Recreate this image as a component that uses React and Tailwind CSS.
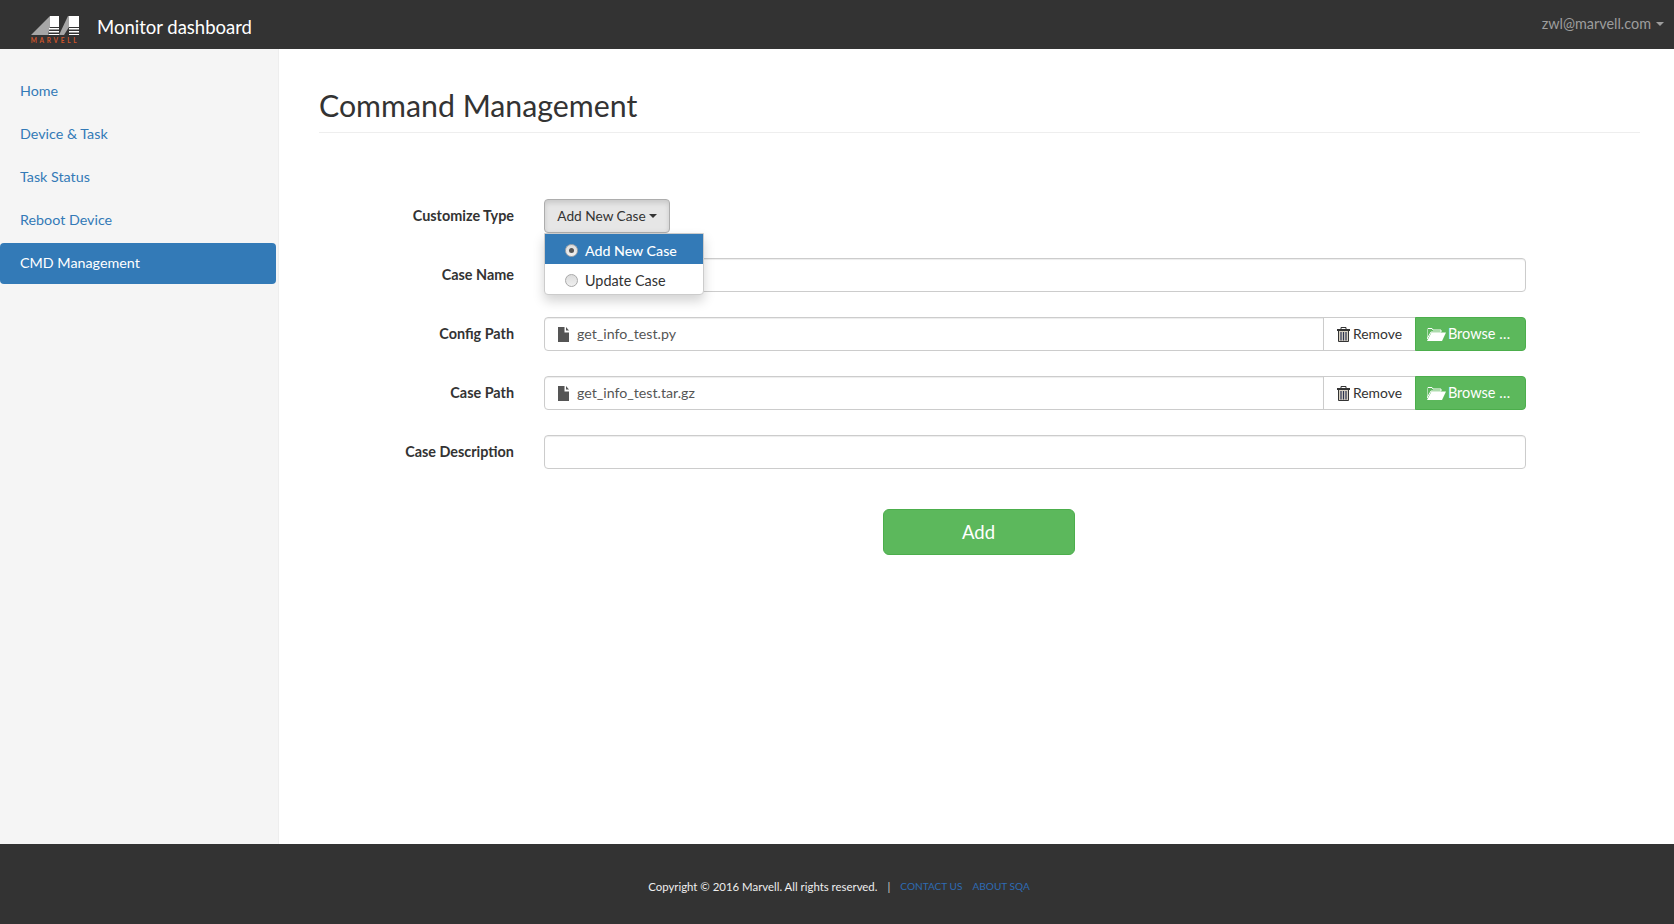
import React from "react";

const navItems = ["Home", "Device & Task", "Task Status", "Reboot Device", "CMD Management"];

const Logo = () => (
  <svg width="48" height="19" viewBox="0 0 48 19" className="block">
    <polygon points="0,19 19,0 19,11 17,19" fill="#a6a6a6" />
    <rect x="19" y="0" width="9" height="11" fill="#ffffff" />
    <rect x="18" y="12" width="10" height="1.5" fill="#ffffff" />
    <rect x="18" y="15" width="10" height="1.5" fill="#ffffff" />
    <rect x="17.500" y="18" width="10.500" height="1" fill="#ffffff" />
    <polygon points="28,19 37,0 38,0 38,11 33,19" fill="#a6a6a6" />
    <rect x="38" y="0" width="10" height="11" fill="#ffffff" />
    <rect x="38" y="12" width="10" height="1.5" fill="#ffffff" />
    <rect x="38" y="15" width="10" height="1.5" fill="#ffffff" />
    <rect x="38" y="18" width="10" height="1" fill="#ffffff" />
  </svg>
);

const FileIcon = () => (
  <svg width="11" height="15" viewBox="0 0 11 15" className="shrink-0">
    <path d="M0 0h6.500v5.500H11V15H0z" fill="#555555" />
    <path d="M8 0l3 3.500H8z" fill="#555555" />
  </svg>
);

const TrashIcon = () => (
  <svg width="13" height="15" viewBox="0 0 13 15" className="shrink-0">
    <path d="M4 2.500V.5h5v2" fill="none" stroke="#333333" />
    <path d="M0 2h13v2H0z" fill="#333333" />
    <path d="M1.500 4v10.500h10V4" fill="#d8d2c4" stroke="#333333" />
    <path d="M4 5v8.500M6.500 5v8.500M9 5v8.500" stroke="#2b3350" strokeWidth="1.200" />
  </svg>
);

const FolderOpenIcon = () => (
  <svg width="19" height="13" viewBox="0 0 19 13" className="shrink-0">
    <path d="M0 11V1.500L1 .5h4l1 1.500h8v2H4z" fill="none" stroke="#ffffff" strokeWidth="1" />
    <path d="M4.500 4.500H19L15 13H0z" fill="#ffffff" />
  </svg>
);

const Label = ({ children }) => (
  <label className="w-[195px] shrink-0 text-right text-[14.400px] font-bold text-[#333333]">{children}</label>
);

const FileRow = ({ label, file }) => (
  <div className="flex items-center">
    <Label>{label}</Label>
    <div className="ml-[30px] flex h-[34px] flex-1">
      <div className="flex flex-1 items-center gap-[8px] rounded-l-[4px] border border-[#cccccc] pl-[13px] text-[14.200px] text-[#555555] shadow-[inset_0_1px_1px_rgba(0,0,0,0.075)]">
        <FileIcon />
        <span>{file}</span>
      </div>
      <button className="-ml-px flex w-[93px] items-center justify-center gap-[3px] border border-[#cccccc] bg-white text-[13.900px] text-[#333333]">
        <TrashIcon />
        Remove
      </button>
      <button className="-ml-px flex w-[111px] items-center justify-center gap-[2px] rounded-r-[4px] border border-[#4cae4c] bg-[#5cb85c] pr-[4px] text-[14.500px] text-white">
        <FolderOpenIcon />
        Browse …
      </button>
    </div>
  </div>
);

const TextRow = ({ label }) => (
  <div className="flex items-center">
    <Label>{label}</Label>
    <input className="ml-[30px] h-[34px] flex-1 rounded-[4px] border border-[#cccccc] shadow-[inset_0_1px_1px_rgba(0,0,0,0.075)]" />
  </div>
);

const Radio = ({ checked }) => (
  <span className="flex h-[13px] w-[13px] items-center justify-center rounded-full border border-[#a9a9a9] bg-gradient-to-b from-[#dcdcdc] to-[#f0f0f0]">
    {checked && <span className="h-[5px] w-[5px] rounded-full bg-[#555555]" />}
  </span>
);

export default function App() {
  return (
    <div className="flex h-[924px] flex-col bg-white font-['Lato','Liberation_Sans',sans-serif] text-[14.300px] text-[#333333]">
      <header className="flex h-[49px] shrink-0 items-center justify-between bg-[#333333]">
        <div className="flex items-center">
          <div className="ml-[31px] mt-[10px] flex w-[48px] flex-col items-center">
            <Logo />
            <span className="mt-[2px] whitespace-nowrap text-[6.500px] font-bold leading-[7px] tracking-[2.700px] text-[#d0552a]">MARVELL</span>
          </div>
          <span className="ml-[18px] mt-[7px] text-[18.500px] text-white">Monitor dashboard</span>
        </div>
        <div className="mr-[10px] -mt-[1px] flex items-center gap-[5px] text-[14.400px] text-[#9d9d9d]">
          zwl@marvell.com
          <span className="mt-[1px] border-x-[4px] border-t-[4px] border-x-transparent border-t-[#9d9d9d]" />
        </div>
      </header>

      <div className="flex flex-1">
        <aside className="w-[279px] shrink-0 border-r border-[#eeeeee] bg-[#f5f5f5] pt-[21px] pr-[2px]">
          <ul className="flex flex-col gap-[2px]">
            {navItems.map((item) => (
              <li
                key={item}
                className={
                  item === "CMD Management"
                    ? "mt-[1px] flex h-[41px] items-center rounded-[4px] bg-[#337ab7] px-[20px] pb-[2px] text-white"
                    : "flex h-[41px] items-center px-[20px] text-[#337ab7]"
                }
              >
                {item}
              </li>
            ))}
          </ul>
        </aside>

        <main className="flex-1 pl-[40px] pr-[34px]">
          <h1 className="mt-[38px] border-b border-[#eeeeee] pb-[9px] text-[30.300px] leading-[36px] text-[#333333]">
            Command Management
          </h1>
          <div className="pr-[114px] pt-[66px]">
            <div className="relative">
              <div className="flex items-center">
                <Label>Customize Type</Label>
                <button className="ml-[30px] flex h-[34px] w-[126px] items-center justify-center gap-[3px] rounded-[4px] border border-[#adadad] bg-[#e6e6e6] text-[13.700px] text-[#333333] shadow-[inset_0_3px_5px_rgba(0,0,0,0.125)]">
                  Add New Case
                  <span className="border-x-[4px] border-t-[4px] border-x-transparent border-t-[#333333]" />
                </button>
              </div>
              <div className="absolute left-[225px] top-[34px] z-10 w-[160px] overflow-hidden rounded-b-[4px] border border-[#cccccc] bg-white text-[14.400px] shadow-[0_6px_12px_rgba(0,0,0,0.175)]">
                <div className="flex h-[30px] items-center gap-[7px] bg-[#337ab7] pl-[20px] pt-[3px] text-[14.200px] font-medium text-white">
                  <Radio checked />
                  Add New Case
                </div>
                <div className="flex h-[30px] items-center gap-[7px] pl-[20px] pt-[3px] text-[#333333]">
                  <Radio />
                  Update Case
                </div>
              </div>
            </div>
            <div className="mt-[25px] flex flex-col gap-[25px]">
              <TextRow label="Case Name" />
              <FileRow label="Config Path" file="get_info_test.py" />
              <FileRow label="Case Path" file="get_info_test.tar.gz" />
              <TextRow label="Case Description" />
            </div>
            <div className="mt-[40px] flex justify-center pl-[112px]">
              <button className="h-[46px] w-[192px] rounded-[6px] border border-[#4cae4c] bg-[#5cb85c] pt-[1px] text-[18.500px] text-white">
                Add
              </button>
            </div>
          </div>
        </main>
      </div>

      <footer className="flex h-[80px] shrink-0 items-center justify-center bg-[#333333] pl-[4px] pt-[5px] text-[11.400px]">
        <span className="text-[#eeeeee]">Copyright © 2016 Marvell. All rights reserved.</span>
        <span className="ml-[10px] text-[#cccccc]">|</span>
        <span className="ml-[10px] text-[10.100px] text-[#2e6bb3]">CONTACT US</span>
        <span className="ml-[10px] text-[10.100px] text-[#2e6bb3]">ABOUT SQA</span>
      </footer>
    </div>
  );
}
